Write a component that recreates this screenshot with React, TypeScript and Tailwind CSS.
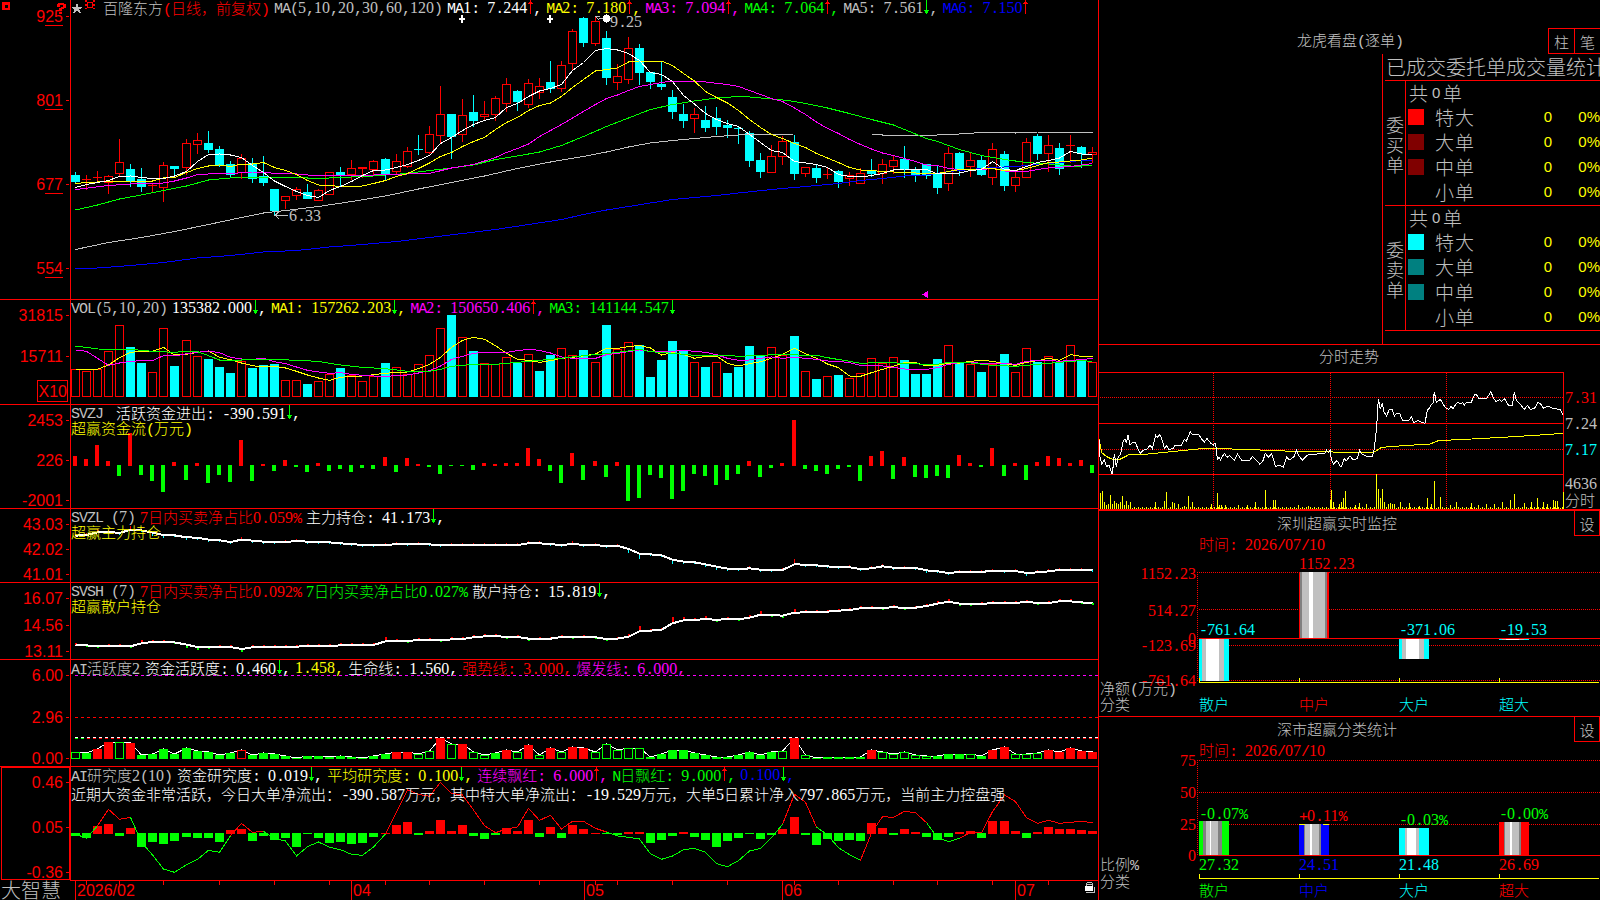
import { Fragment, type ReactNode } from "react";

const RED = "#ff0000";
const CYAN = "#00ffff";
const GREEN = "#00ff00";
const YELLOW = "#ffff00";
const MAGENTA = "#ff00ff";
const BLUE = "#0000ff";
const GRAY = "#c0c0c0";
const DARK = "#808080";
const WHITE = "#ffffff";

// candle: colour, high, body top, body bottom, low
type Candle = [string, number, number, number, number];

const candles: Candle[] = [
  ["c", 172, 175, 182, 183], ["r", 175, 179, 180, 190], ["r", 171, 177, 178, 182], ["r", 175, 176, 183, 194],
  ["r", 139, 162, 174, 176], ["c", 164, 169, 181, 187], ["c", 168, 179, 187, 192], ["r", 183, 185, 186, 193],
  ["r", 162, 165, 188, 202], ["c", 166, 166, 169, 176], ["r", 139, 143, 168, 175], ["r", 133, 140, 145, 154],
  ["c", 131, 143, 150, 153], ["c", 146, 149, 166, 167], ["c", 161, 164, 175, 177], ["r", 154, 158, 173, 179],
  ["c", 158, 163, 179, 183], ["c", 156, 176, 183, 186], ["c", 189, 189, 211, 215], ["r", 196, 196, 201, 209],
  ["r", 187, 189, 196, 200], ["c", 184, 192, 199, 199], ["r", 189, 190, 201, 201], ["r", 172, 172, 195, 195],
  ["c", 167, 172, 175, 187], ["r", 160, 168, 175, 180], ["r", 167, 167, 169, 178], ["r", 160, 161, 170, 176],
  ["c", 158, 159, 174, 180], ["r", 154, 161, 172, 174], ["r", 147, 151, 167, 168], ["c", 135, 149, 150, 155],
  ["r", 126, 134, 153, 154], ["r", 86, 114, 136, 143], ["c", 114, 114, 137, 159], ["r", 99, 115, 135, 142],
  ["c", 95, 112, 121, 127], ["r", 101, 114, 117, 120], ["r", 96, 98, 115, 121], ["r", 78, 84, 104, 112],
  ["c", 90, 91, 102, 111], ["r", 79, 83, 105, 108], ["r", 78, 86, 93, 99], ["c", 61, 82, 89, 93],
  ["r", 61, 65, 89, 92], ["r", 29, 31, 64, 70], ["c", 17, 18, 43, 47], ["r", 16, 21, 44, 46],
  ["c", 31, 38, 78, 85], ["r", 64, 76, 83, 90], ["r", 37, 48, 80, 84], ["c", 44, 48, 73, 85],
  ["c", 72, 72, 82, 89], ["c", 62, 84, 87, 90], ["c", 90, 97, 112, 119], ["c", 104, 114, 121, 128],
  ["r", 108, 114, 119, 133], ["c", 106, 120, 128, 132], ["c", 107, 118, 127, 135], ["c", 120, 125, 128, 138],
  ["c", 127, 128, 129, 144], ["c", 131, 133, 161, 167], ["c", 153, 160, 172, 178], ["r", 145, 156, 173, 173],
  ["r", 136, 141, 157, 165], ["c", 135, 142, 174, 180], ["r", 167, 167, 174, 177], ["c", 165, 168, 178, 183],
  ["r", 168, 174, 175, 179], ["c", 170, 171, 182, 188], ["r", 172, 175, 179, 186], ["r", 168, 173, 184, 184],
  ["c", 159, 171, 174, 177], ["r", 159, 164, 174, 184], ["r", 156, 160, 167, 174], ["c", 146, 159, 170, 178],
  ["c", 167, 169, 175, 182], ["c", 164, 164, 176, 179], ["c", 166, 173, 188, 194], ["r", 147, 153, 184, 191],
  ["c", 152, 153, 170, 176], ["r", 153, 160, 167, 177], ["c", 156, 160, 175, 176], ["r", 143, 149, 178, 185],
  ["c", 151, 154, 186, 191], ["r", 172, 177, 186, 192], ["r", 138, 142, 178, 178], ["c", 134, 136, 154, 160],
  ["r", 135, 145, 154, 172], ["c", 143, 148, 169, 175], ["r", 135, 145, 146, 163], ["c", 146, 147, 154, 168],
  ["r", 147, 152, 155, 163],
];

const ma1 = [
  187, 184, 182, 180, 176, 175.5, 177, 178, 178, 175.5, 171, 161, 154, 153.5, 154.5, 157, 165, 172, 180.5, 186, 191,
  195, 197, 190, 186, 181, 175, 170, 169.5, 167, 164, 160, 155, 143, 137, 130, 124, 120, 117, 107, 103, 96, 90.5, 88,
  84, 70, 62, 50, 48, 49.5, 53, 60, 72, 74, 81, 95, 103.5, 113, 119, 123, 126, 134, 142, 150, 152, 161, 162.5, 164,
  167, 174, 176, 176.5, 175, 173, 169.5, 168.5, 168.5, 169, 173.5, 173, 172.5, 170, 169, 161, 169, 170, 166, 162, 160,
  157.5, 151, 153.5, 154,
];

// sparse lines are flat lists of candle index, y
const ma2 = [
  0, 183, 1, 182, 3, 181, 5, 180.5, 7, 180.5, 8, 177.5, 9, 177, 10, 172, 11, 168, 12, 165.5, 13, 164.5, 14, 166, 15,
  163.5, 16, 163.5, 17, 162, 18, 167, 19, 170, 20, 174, 21, 180, 22, 184.5, 23, 185, 24, 186, 25, 186.5, 26, 185.5, 27,
  183, 28, 180, 29, 176, 30, 173, 31, 168, 32, 162.5, 33, 156, 34, 152, 35, 146, 36, 141, 37, 137, 38, 129, 39, 122, 40,
  117, 41, 110, 42, 105, 43, 102.5, 44, 96, 45, 87, 46, 79, 47, 70.5, 48, 69, 49, 67.5, 50, 61.5, 51, 60.5, 53, 60.5,
  54, 65, 55, 73, 56, 80.5, 57, 91, 58, 97, 59, 102.5, 60, 110, 61, 119, 62, 127, 63, 134, 64, 138, 65, 143, 66, 147,
  67, 153, 68, 157.5, 69, 162, 70, 167, 71, 169.5, 72, 170, 73, 171, 74, 171.5, 75, 172, 76, 172.5, 78, 173, 79, 171,
  80, 169, 82, 168.5, 83, 168, 84, 170, 85, 170, 86, 168, 87, 165, 88, 162, 89, 161.5, 90, 160.5, 91, 159.5, 92, 157.5,
];
const ma3 = [
  0, 189, 3, 185, 5, 183.5, 8, 182.5, 9, 180.5, 10, 177.5, 11, 174, 12, 173.5, 14, 173, 16, 171.5, 17, 171.5, 18, 173,
  20, 173.5, 21, 174.5, 23, 175.5, 26, 175, 28, 174, 30, 173.5, 32, 173, 34, 167.5, 36, 164, 38, 157, 39, 152, 40, 148,
  41, 143.5, 42, 136, 43, 130, 44, 124, 45, 117.5, 46, 111, 47, 104, 48, 98, 49, 94.5, 50, 90, 51, 86, 52, 84, 53, 82,
  54, 80.5, 56, 80.5, 57, 81.5, 59, 84, 60, 86, 61, 90, 62, 94, 63, 98, 64, 101, 65, 107.5, 66, 114, 67, 121.5, 68,
  128, 69, 133, 70, 139, 71, 144, 72, 148.5, 73, 152.5, 74, 155, 75, 158, 76, 161, 77, 164.5, 78, 165, 79, 168, 80,
  169, 82, 169, 83, 168, 84, 170.5, 86, 171, 87, 169, 88, 167.5, 90, 166, 92, 163,
];
const ma4 = [
  0, 209.5, 2, 204.5, 4, 198.5, 6, 194.5, 8, 190, 10, 185.5, 12, 179.5, 14, 177.5, 15, 176.5, 20, 176.5, 21, 177.5, 23,
  177.5, 25, 176.5, 27, 175.5, 28, 174.5, 30, 173, 32, 170, 34, 167.5, 36, 164.5, 38, 159, 40, 155.5, 42, 151.5, 44,
  145, 46, 136, 48, 126, 50, 117.5, 52, 109, 54, 104, 56, 100.5, 58, 97.5, 60, 96, 61, 96.5, 62, 97.5, 63, 98.5, 64,
  99.5, 65, 101, 66, 103, 68, 107.5, 70, 113, 72, 119, 74, 124.5, 75, 129, 77, 138, 78, 141, 80, 149, 82, 155, 84, 159,
  86, 162, 88, 163.5, 90, 165.5, 91, 165.5, 92, 165,
];
const ma5 = [
  0, 249, 3, 242, 6, 237, 9, 231, 12, 224, 15, 217, 17, 212.5, 19, 210, 22, 206, 25, 201, 28, 195.5, 31, 188.5, 34,
  182, 37, 175.5, 40, 168, 43, 161.5, 46, 156, 48, 151.5, 50, 146.5, 52, 142.5, 54, 140, 56, 138, 58, 136, 60, 134.5,
  62, 134, 65, 133.5, 72, 133.5, 73, 134.5, 78, 134.5, 80, 133.5, 82, 132, 85, 132.5, 87, 131.5, 92, 131.5,
];
const ma6 = [
  0, 268.5, 2, 267.5, 5, 265, 8, 262, 11, 257.5, 14, 255, 17, 251.5, 20, 250, 23, 246.5, 26, 244, 29, 241, 32, 237, 35,
  233, 38, 229, 41, 224, 44, 219, 46, 214, 48, 209.5, 50, 206, 52, 202.5, 54, 199, 56, 197, 58, 195, 60, 192.5, 63,
  189, 66, 186, 69, 183, 71, 180, 73, 178, 75, 175.5, 77, 174.5, 79, 171, 81, 169, 83, 167, 85, 166, 87, 164, 89, 162,
  91, 160, 92, 159.5,
];

// bar heights of the volume pane
const volumes = [
  28, 26, 28, 46, 72, 50, 34, 25, 69, 31, 57, 41, 38, 30, 24, 36, 29, 32, 33, 17, 17, 13, 16, 23, 29, 22, 16, 21, 34,
  30, 23, 33, 42, 69, 82, 60, 46, 34, 33, 40, 34, 43, 26, 42, 49, 42, 47, 35, 72, 48, 55, 52, 20, 37, 56, 46, 35, 30,
  35, 24, 30, 51, 41, 50, 42, 61, 26, 18, 21, 22, 19, 24, 39, 34, 40, 37, 23, 23, 38, 52, 34, 33, 25, 33, 43, 25, 49,
  35, 41, 35, 52, 37, 35,
];
const volumeDown = new Set([
  5, 6, 9, 12, 13, 14, 16, 17, 18, 21, 24, 28, 34, 36, 40, 42, 43, 46, 48, 51, 52, 53, 54, 55, 57, 59, 60, 61, 62, 65,
  67, 69, 75, 76, 77, 78, 80, 82, 84, 87, 89, 91,
]);

// the indicator series below are stored in thirds of a pixel from the pane's origin
const vma1 = [
  223, 223, 223, 210, 188, 172, 169, 169, 157, 180, 178, 172, 168, 187, 194, 204, 212, 216, 214, 219, 229, 240, 249,
  256, 247, 244, 243, 239, 235, 232, 231, 221, 208, 187, 157, 136, 127, 133, 152, 175, 193, 196, 202, 197, 190, 187,
  183, 177, 160, 160, 155, 151, 159, 180, 173, 178, 190, 184, 183, 205, 213, 206, 200, 190, 178, 160, 176, 190, 207,
  218, 243, 244, 233, 223, 214, 202, 203, 213, 211, 204, 204, 199, 196, 199, 206, 211, 202, 197, 190, 196, 179, 184,
  184,
];
const vma2 = [
  165, 169, 190, 211, 204, 199, 197, 197, 182, 183, 176, 172, 168, 173, 187, 192, 193, 190, 200, 206, 216, 226, 231,
  235, 233, 238, 241, 243, 244, 242, 240, 234, 227, 213, 193, 184, 175, 172, 172, 172, 167, 163, 166, 174, 186, 190,
  190, 190, 179, 175, 170, 165, 169, 169, 169, 166, 169, 172, 179, 190, 196, 195, 190, 186, 190, 187, 190, 193, 198,
  199, 203, 211, 211, 213, 217, 222, 223, 223, 218, 208, 203, 202, 205, 205, 205, 208, 199, 196, 196, 199, 196, 194,
  190,
];
const vma3 = [
  0, 154, 1, 157, 2, 162, 5, 163, 7, 169, 9, 172, 10, 169, 11, 170, 12, 182, 13, 195, 15, 195, 16, 193, 18, 193, 20,
  196, 22, 199, 23, 205, 24, 210, 26, 217, 28, 221, 30, 229, 32, 229, 33, 223, 34, 214, 36, 208, 38, 208, 40, 202, 42,
  196, 44, 190, 46, 182, 48, 176, 50, 168, 51, 163, 52, 170, 54, 175, 56, 181, 59, 181, 60, 184, 62, 181, 64, 178, 66,
  181, 67, 181, 68, 188, 70, 199, 71, 205, 73, 202, 75, 205, 77, 208, 78, 208, 79, 202, 81, 204, 83, 211, 85, 214, 87,
  208, 90, 199, 91, 197, 92, 199,
];

const moneyFlow = [
  483, 492, 450, 498, 543, 414, 540, 558, 591, 501, 555, 504, 564, 540, 561, 435, 558, 507, 528, 495, 516, 531, 504,
  528, 522, 531, 519, 522, 486, 531, 489, 507, 516, 537, 513, 513, 525, 504, 507, 504, 504, 459, 492, 528, 564, 474,
  555, 498, 546, 501, 618, 609, 540, 549, 612, 588, 537, 543, 570, 555, 537, 498, 546, 519, 504, 375, 522, 528, 537,
  522, 516, 558, 483, 468, 552, 486, 546, 549, 543, 549, 480, 504, 516, 459, 543, 504, 555, 501, 483, 489, 504, 495,
  534,
];

const mainHold = [
  92, 90, 82, 80, 84, 74, 76, 83, 90, 91, 97, 98, 104, 106, 111, 104, 107, 110, 111, 111, 108, 110, 111, 112, 115, 117,
  120, 121, 121, 117, 118, 117, 118, 121, 121, 121, 121, 121, 121, 121, 120, 115, 115, 117, 121, 116, 120, 120, 124,
  122, 132, 146, 148, 151, 164, 170, 172, 178, 185, 191, 193, 190, 194, 195, 195, 178, 179, 181, 184, 187, 187, 192,
  190, 184, 188, 188, 189, 196, 199, 204, 201, 201, 201, 197, 199, 198, 204, 202, 199, 195, 195, 195, 196,
];

const retailHold = [
  420, 421, 424, 423, 423, 424, 415, 411, 411, 412, 419, 426, 427, 427, 426, 432, 427, 426, 426, 426, 425, 423, 423,
  423, 421, 420, 420, 420, 409, 407, 408, 405, 405, 406, 403, 402, 397, 394, 393, 396, 396, 401, 401, 401, 396, 397,
  396, 397, 402, 401, 395, 379, 377, 374, 355, 346, 346, 341, 345, 341, 343, 338, 329, 330, 332, 323, 322, 321, 320,
  317, 315, 310, 309, 310, 306, 310, 308, 303, 296, 290, 296, 298, 296, 295, 294, 294, 290, 294, 294, 289, 289, 292,
  295,
];

// upper case = filled, lower case = hollow
const activity =
  "g741 G744 R732 R711 g711 R714 G750 G747 G732 G747 G729 G738 G741 G750 G744 r735 G750 G744 G747 G753 G759 G753 G753 G756 G753 G756 G759 G753 G747 R741 R741 g747 g738 R699 g717 R717 g741 g750 G744 R735 g741 R720 g750 R729 g741 R726 R729 g741 g717 g735 g729 g729 G756 G747 G735 G735 G744 G750 G756 G756 G750 G741 G750 G741 g738 R700 g750 G759 G756 G756 G756 G756 R735 g741 g747 g741 g750 g753 G753 G747 G747 g747 G753 R735 R726 g747 g747 g744 R735 R741 R729 R738 R741"
    .split(" ")
    .map((s) => ({ kind: s[0], y: Number(s.slice(1)) }));

const research = [
  243, 249, 212, 207, 243, 219, 276, 261, 267, 258, 246, 249, 249, 261, 225, 222, 258, 243, 255, 249, 276, 237, 249,
  264, 261, 267, 264, 246, 234, 210, 201, 240, 228, 195, 228, 210, 243, 252, 240, 219, 228, 195, 246, 216, 249, 210,
  222, 234, 237, 240, 231, 231, 264, 255, 243, 231, 246, 255, 276, 258, 249, 237, 252, 240, 222, 186, 240, 270, 252,
  258, 255, 258, 204, 219, 240, 222, 231, 246, 255, 246, 231, 228, 249, 198, 198, 228, 249, 231, 216, 222, 222, 225,
  228,
];
const researchLine = [
  237, 250, 212, 163, 193, 187, 262, 300, 342, 352, 329, 313, 286, 292, 242, 205, 232, 229, 250, 258, 303, 275, 261,
  277, 284, 298, 301, 276, 237, 170, 104, 118, 124, 82, 115, 120, 165, 212, 233, 222, 216, 160, 196, 181, 222, 199,
  199, 220, 231, 243, 247, 252, 296, 313, 303, 284, 280, 292, 326, 335, 317, 288, 280, 248, 208, 118, 142, 216, 240,
  278, 299, 316, 234, 185, 187, 169, 173, 203, 247, 260, 250, 232, 233, 170, 120, 140, 188, 205, 196, 205, 202, 199,
  203,
];
const researchSpans: [number, number][] = [[0, 2], [5, 14], [17, 28], [48, 64], [67, 71], [77, 80]];

const intraday =
  "12,300 15,350 20,372 28,360 35,380 42,375 52,403 58,342 64,380 70,350 76,345 84,305 90,297 94,310 99,284 105,315 112,308 122,308 128,325 135,340 146,330 158,326 165,315 172,326 182,286 187,292 194,284 200,295 208,325 215,318 222,328 235,326 240,315 260,315 268,298 274,303 286,275 292,284 300,282 312,285 320,297 328,306 336,296 348,310 355,316 360,308 364,325 367,358 372,352 376,360 388,340 396,352 404,346 418,362 427,342 440,360 465,360 472,350 480,357 495,373 504,362 511,340 520,352 530,342 542,380 552,375 565,382 575,352 583,360 597,350 604,330 612,348 622,360 632,350 640,344 665,342 690,340 694,330 700,338 706,330 709,360 716,372 726,362 738,382 748,356 754,362 765,348 775,360 787,355 794,330 800,342 812,348 832,350 838,325 845,262 850,176 856,208 862,188 866,215 875,228 882,210 892,208 898,228 905,220 915,222 922,240 942,240 950,230 956,248 968,242 990,250 997,210 1003,205 1008,195 1014,190 1018,155 1024,188 1036,178 1044,192 1054,206 1062,208 1068,200 1074,206 1086,188 1096,190 1104,188 1108,195 1116,186 1128,188 1140,162 1146,166 1152,175 1175,175 1188,155 1195,175 1204,185 1214,178 1220,185 1228,175 1236,188 1240,195 1252,196 1258,155 1264,182 1275,192 1288,208 1298,196 1306,208 1318,206 1328,188 1336,190 1346,205 1358,198 1374,206 1396,208 1405,226";
const intradayAvg =
  "12,298 20,338 35,350 52,358 75,358 100,345 160,342 260,332 330,325 450,328 540,332 600,334 700,335 740,338 835,338 860,322 940,316 1005,312 1030,302 1130,297 1240,291 1320,286 1405,280";
const intradayVolume: Record<number, number> = {
  16: 460, 22: 453, 28: 485, 34: 494, 40: 493, 46: 466, 52: 492, 58: 484, 64: 488, 70: 492, 76: 486, 82: 468, 88: 495,
  94: 483, 100: 494, 106: 487, 182: 487, 208: 484, 214: 456, 232: 486, 238: 489, 250: 492, 268: 497, 280: 468,
  292: 487, 349: 492, 367: 458, 373: 494, 379: 495, 391: 494, 430: 495, 456: 495, 481: 487, 511: 450, 535: 480,
  541: 480, 610: 496, 640: 497, 706: 480, 709: 450, 715: 487, 733: 492, 739: 487, 745: 473, 751: 453, 781: 494,
  793: 488, 814: 492, 844: 403, 850: 447, 856: 473, 862: 447, 868: 487, 880: 493, 886: 488, 892: 493, 898: 492,
  916: 487, 943: 488, 973: 497, 997: 474, 1009: 492, 1018: 423, 1036: 470, 1066: 495, 1084: 487, 1130: 488,
  1150: 495, 1175: 491, 1198: 491, 1222: 485, 1246: 479, 1258: 462, 1288: 488, 1308: 486, 1327: 474, 1345: 487,
  1357: 493, 1375: 480, 1381: 483, 1387: 483, 1405: 456,
};

const cx = (i: number) => 75 + Math.round(i * 11.054);
const at = (origin: number, v: number) => origin + v / 3;
const ry = (origin: number, v: number) => Math.round(at(origin, v));

const dense = (ys: number[], origin?: number) =>
  ys.map((y, i) => `${cx(i) + 0.5},${origin === undefined ? y + 0.5 : at(origin, y)}`).join(" ");

const sparse = (flat: number[], origin?: number) => {
  const out: string[] = [];
  for (let k = 0; k < flat.length; k += 2) {
    const y = flat[k + 1];
    out.push(`${cx(flat[k]) + 0.5},${origin === undefined ? y + 0.5 : at(origin, y)}`);
  }
  return out.join(" ");
};

function Line({ points, color, width = 1 }: { points: string; color: string; width?: number }) {
  return <polyline points={points} fill="none" stroke={color} strokeWidth={width} />;
}

function Box({ x, y, h, color, hollow }: { x: number; y: number; h: number; color: string; hollow?: boolean }) {
  const height = Math.max(1, h);
  if (hollow && height > 2)
    return <rect x={x - 3.5} y={y + 0.5} width={8} height={height - 1} fill="#000" stroke={color} />;
  return <rect x={x - 4} y={y} width={9} height={height} fill={color} />;
}

const HAN = "font-['Noto_Sans_CJK_SC',sans-serif] text-[15px] font-light tracking-normal";
const DIGIT = "font-['Liberation_Serif',serif] text-[16px] tracking-normal";
const LATIN = "font-['Liberation_Mono',monospace] text-[15px] tracking-[-1px]";

// 8px cells for latin and digits, 15px cells for han
function Runs({ text, svg }: { text: string; svg?: boolean }) {
  const Tag = svg ? "tspan" : "span";
  const parts = text.match(/[\u2e80-\uffff]+|[0-9]+|[^\u2e80-\uffff0-9]+/g) ?? [];
  return (
    <>
      {parts.map((p, i) => (
        <Tag key={i} className={/[\u2e80-\uffff]/.test(p) ? HAN : /[0-9]/.test(p) ? DIGIT : LATIN}>
          {p}
        </Tag>
      ))}
    </>
  );
}

function T({ x, y, color, text, end }: { x: number; y: number; color: string; text: string; end?: boolean }) {
  return (
    <text x={x} y={y + 5} fill={color} textAnchor={end ? "end" : "start"} className="whitespace-pre">
      <Runs text={text} svg />
    </text>
  );
}

function Arrow({ dir }: { dir: "up" | "down" }) {
  return (
    <svg width="6" height="15" className="shrink-0" shapeRendering="crispEdges">
      {dir === "up" ? (
        <path d="M3 0h1v14h-1zM2 2h3v1h-3zM1 3h5v1h-5z" fill={RED} />
      ) : (
        <path d="M3 0h1v14h-1zM1 10h5v1h-5zM2 11h3v2h-3z" fill={GREEN} />
      )}
    </svg>
  );
}

type Item = { text: string; color: string; dir?: "up" | "down"; plain?: boolean };

function Legend({ items, className = "" }: { items: Item[]; className?: string }) {
  return (
    <div className={`relative z-10 flex h-[15px] gap-[5px] whitespace-pre leading-[15px] ${className}`}>
      {items.map((it, i) => (
        <div key={i} className="flex shrink-0 items-center" style={{ color: it.color }}>
          <span className="h-[15px] leading-[15px]">
            <Runs text={it.text} />
          </span>
          {it.dir && <Arrow dir={it.dir} />}
          {!it.plain && (
            <span className="h-[15px] leading-[15px]">
              <Runs text="," />
            </span>
          )}
        </div>
      ))}
    </div>
  );
}

function Pane({
  top,
  height,
  ticks,
  legend,
  caption,
  children,
}: {
  top: number;
  height: number;
  ticks: [number, string][];
  legend: Item[];
  caption?: ReactNode;
  children: ReactNode;
}) {
  return (
    <section className="relative shrink-0" style={{ height }}>
      <svg
        className="absolute inset-0"
        width={1099}
        height={height}
        viewBox={`0 ${top} 1099 ${height}`}
        shapeRendering="crispEdges"
      >
        {top > 0 && <rect x="0" y={top} width="1099" height="1" fill={RED} />}
        <rect x="70" y={top} width="1" height={height} fill={RED} />
        {ticks.map(([y, label]) => (
          <Fragment key={label}>
            <rect x="66" y={y} width="3" height="1" fill={RED} />
            <text x="63" y={y + 6} textAnchor="end" fill={RED} className="font-['Liberation_Sans',sans-serif] text-[16px]">
              {label}
            </text>
          </Fragment>
        ))}
        {children}
      </svg>
      <Legend items={legend} className={top > 0 ? "ml-[71px] mt-px" : "ml-[103px]"} />
      {caption}
    </section>
  );
}

function Caption({ text, color, className }: { text: string; color: string; className: string }) {
  return (
    <div className={`relative z-10 ml-[71px] h-[15px] whitespace-pre leading-[15px] ${className}`} style={{ color }}>
      <Runs text={text} />
    </div>
  );
}

function PricePane() {
  return (
    <Pane
      top={0}
      height={299}
      ticks={[[16, "925"], [100, "801"], [184, "677"], [268, "554"]]}
      legend={[
        { text: "MA(5,10,20,30,60,120)", color: GRAY, plain: true },
        { text: "MA1: 7.244", color: WHITE, dir: "up" },
        { text: "MA2: 7.180", color: YELLOW, dir: "up" },
        { text: "MA3: 7.094", color: MAGENTA, dir: "up" },
        { text: "MA4: 7.064", color: GREEN, dir: "up" },
        { text: "MA5: 7.561", color: GRAY, dir: "down" },
        { text: "MA6: 7.150", color: BLUE, dir: "up", plain: true },
      ]}
    >
      {[25, 109, 193, 277].map((y) => (
        <rect key={y} x="45" y={y} width="18" height="1" fill={RED} />
      ))}
      {candles.map(([kind, high, a, b, low], i) => {
        const color = kind === "c" ? CYAN : RED;
        return (
          <g key={i}>
            <rect x={cx(i)} y={high} width="1" height={low - high} fill={color} />
            <Box x={cx(i)} y={a} h={b - a} color={color} hollow={kind === "r"} />
          </g>
        );
      })}
      <Line points={sparse(ma6)} color={BLUE} />
      <Line points={sparse(ma5)} color={GRAY} />
      <Line points={sparse(ma4)} color={GREEN} />
      <Line points={sparse(ma3)} color={MAGENTA} />
      <Line points={sparse(ma2)} color={YELLOW} />
      <Line points={dense(ma1)} color={WHITE} />
      <path d="M461 15h2v8h-2zM459 18h6v2h-6zM549 15h2v8h-2zM547 18h6v2h-6z" fill={WHITE} />
      <path d="M603 16h7v5h-7zM604 15h5v7h-5zM606 14h1v9h-1zM602 18h9v1h-9z" fill={WHITE} />
      <path d="M595.5 16.5l4 4M595.5 16.5h4M599 18.5h4" stroke={GRAY} fill="none" />
      <path d="M279 211.5l-4 4l4 3M275 215.5h13" stroke={GRAY} fill="none" />
      <T x={610} y={22} color={GRAY} text="9.25" />
      <T x={289} y={216} color={GRAY} text="6.33" />
      <path d="M928 291v7l-6-3.500z" fill={MAGENTA} />
    </Pane>
  );
}

function VolumePane() {
  return (
    <Pane
      top={299}
      height={105}
      ticks={[[315, "31815"], [356, "15711"]]}
      legend={[
        { text: "VOL(5,10,20)", color: GRAY, plain: true },
        { text: "135382.000", color: WHITE, dir: "down" },
        { text: "MA1: 157262.203", color: YELLOW, dir: "down" },
        { text: "MA2: 150650.406", color: MAGENTA, dir: "up" },
        { text: "MA3: 141144.547", color: GREEN, dir: "down", plain: true },
      ]}
    >
      <rect x="37.5" y="380.5" width="30" height="21" fill="none" stroke={RED} />
      <text x="67" y="397" textAnchor="end" fill={RED} className="font-['Liberation_Sans',sans-serif] text-[16px]">
        X10
      </text>
      {volumes.map((h, i) => (
        <Box key={i} x={cx(i)} y={397 - h} h={h} color={volumeDown.has(i) ? CYAN : RED} hollow={!volumeDown.has(i)} />
      ))}
      <Line points={dense(vma1, 295)} color={YELLOW} />
      <Line points={dense(vma2, 295)} color={MAGENTA} />
      <Line points={sparse(vma3, 295)} color={GREEN} />
    </Pane>
  );
}

function FlowPane() {
  return (
    <Pane
      top={404}
      height={104}
      ticks={[[420, "2453"], [460, "226"], [500, "-2001"]]}
      legend={[
        { text: "SVZJ ", color: GRAY, plain: true },
        { text: "活跃资金进出: -390.591", color: WHITE, dir: "down" },
      ]}
      caption={<Caption text="超赢资金流(万元)" color={YELLOW} className="mt-0" />}
    >
      {moneyFlow.map((v, i) => {
        const y = ry(295, v);
        return v < 512 ? (
          <rect key={i} x={cx(i) - 2} y={y} width="4" height={466 - y} fill={RED} />
        ) : (
          <rect key={i} x={cx(i) - 2} y={465} width="4" height={y - 465} fill={GREEN} />
        );
      })}
    </Pane>
  );
}

function HoldLine({ data, down, tick }: { data: number[]; down: string; tick: number }) {
  return (
    <>
      {data.map((v, i) => {
        const d = i ? v - data[i - 1] : -1;
        const y = at(505, v);
        const len = Math.max(1, Math.abs(d) * 0.28) + 1;
        return d > 0 ? (
          <rect key={i} x={cx(i)} y={y} width={tick} height={len} fill={down} />
        ) : (
          <rect key={i} x={cx(i)} y={y - len} width={tick} height={len} fill={RED} />
        );
      })}
      <Line points={dense(data, 505)} color={WHITE} width={2} />
    </>
  );
}

function MainHoldPane() {
  return (
    <Pane
      top={508}
      height={74}
      ticks={[[524, "43.03"], [549, "42.02"], [574, "41.01"]]}
      legend={[
        { text: "SVZL (7)", color: GRAY, plain: true },
        { text: "7日内买卖净占比0.059%", color: RED, plain: true },
        { text: "主力持仓: 41.173", color: WHITE, dir: "down" },
      ]}
      caption={<Caption text="超赢主力持仓" color={YELLOW} className="mt-0" />}
    >
      <HoldLine data={mainHold} down={CYAN} tick={1} />
    </Pane>
  );
}

function RetailHoldPane() {
  return (
    <Pane
      top={582}
      height={77}
      ticks={[[598, "16.07"], [625, "14.56"], [651, "13.11"]]}
      legend={[
        { text: "SVSH (7)", color: GRAY, plain: true },
        { text: "7日内买卖净占比0.092%", color: RED, plain: true },
        { text: "7日内买卖净占比0.027%", color: GREEN, plain: true },
        { text: "散户持仓: 15.819", color: WHITE, dir: "down" },
      ]}
      caption={<Caption text="超赢散户持仓" color={YELLOW} className="mt-0" />}
    >
      <HoldLine data={retailHold} down={GREEN} tick={2} />
    </Pane>
  );
}

function Dashes({ y, color, from = 75, to = 1098 }: { y: number; color: string; from?: number; to?: number }) {
  return <line x1={from} x2={to} y1={y + 0.5} y2={y + 0.5} stroke={color} strokeDasharray="3 3" />;
}

function ActivityPane() {
  return (
    <Pane
      top={659}
      height={107}
      ticks={[[675, "6.00"], [717, "2.96"], [758, "0.00"]]}
      legend={[
        { text: "AI活跃度2", color: GRAY, plain: true },
        { text: "资金活跃度: 0.460", color: WHITE, dir: "down" },
        { text: "1.458", color: YELLOW },
        { text: "生命线: 1.560", color: WHITE },
        { text: "强势线: 3.000", color: RED },
        { text: "爆发线: 6.000", color: MAGENTA },
      ]}
    >
      <Dashes y={675} color={MAGENTA} />
      <Dashes y={717} color={RED} />
      <Dashes y={737} color={WHITE} />
      <Dashes y={738} color={RED} />
      {[[75, 87], [129, 387], [483, 495], [639, 771], [807, 861], [927, 981]].map(([a, b]) => (
        <Dashes key={a} y={738} color={GREEN} from={a} to={b} />
      ))}
      <Line points={dense(activity.map((a) => a.y), 505)} color={WHITE} />
      {activity.map(({ kind, y }, i) => {
        const t = ry(505, y);
        return (
          <Box
            key={i}
            x={cx(i)}
            y={t}
            h={759 - t}
            color={kind.toUpperCase() === "R" ? RED : GREEN}
            hollow={kind === kind.toLowerCase()}
          />
        );
      })}
    </Pane>
  );
}

function ResearchPane() {
  const pts = dense(researchLine, 755).split(" ");
  return (
    <Pane
      top={766}
      height={114}
      ticks={[[782, "0.46"], [827, "0.05"], [872, "-0.36"]]}
      legend={[
        { text: "AI研究度2(10)", color: GRAY, plain: true },
        { text: "资金研究度: 0.019", color: WHITE, dir: "down" },
        { text: "平均研究度: 0.100", color: YELLOW, dir: "down" },
        { text: "连续飘红: 6.000", color: MAGENTA, dir: "up" },
        { text: "N日飘红: 9.000", color: GREEN, dir: "up" },
        { text: "0.100", color: BLUE, dir: "down" },
      ]}
      caption={
        <Caption
          text="近期大资金非常活跃，今日大单净流出：-390.587万元，其中特大单净流出：-19.529万元，大单5日累计净入797.865万元，当前主力控盘强"
          color={WHITE}
          className="mt-[4px]"
        />
      }
    >
      <rect x="1.500" y="767.5" width="68" height="112" fill="none" stroke={RED} />
      {research.map((v, i) => {
        const y = ry(755, v);
        return v < 236 ? (
          <Box key={i} x={cx(i)} y={y} h={834 - y} color={RED} />
        ) : (
          <Box key={i} x={cx(i)} y={833} h={y - 833} color={GREEN} />
        );
      })}
      <Line points={pts.join(" ")} color={RED} />
      {researchSpans.map(([a, b]) => (
        <Line key={a} points={pts.slice(a, b + 1).join(" ")} color={GREEN} />
      ))}
    </Pane>
  );
}

const months: [number, string][] = [[75, "2026/02"], [351, "04"], [584, "05"], [782, "06"], [1015, "07"]];
const weekTicks = [86, 119, 163, 219, 274, 329, 385, 429, 484, 539, 595, 617, 672, 727, 794, 838, 893, 937, 992, 1048];

function TimeAxis() {
  return (
    <footer className="flex h-[20px]">
      <div className="w-[70px] whitespace-nowrap pl-[1px] font-['Noto_Sans_CJK_SC',sans-serif] text-[20px] font-light leading-[20px] text-[#c0c0c0]">
        大智慧
      </div>
      <svg width="1029" height="20" viewBox="70 880 1029 20" shapeRendering="crispEdges">
        <rect x="70" y="880" width="1029" height="1" fill={RED} />
        {weekTicks.map((x) => (
          <rect key={x} x={x} y="881" width="1" height="4" fill={RED} />
        ))}
        {months.map(([x, label]) => (
          <Fragment key={x}>
            <rect x={x} y="881" width="1" height="19" fill={RED} />
            <text x={x + 2} y="896" fill={RED} className="font-['Liberation_Sans',sans-serif] text-[16px]">
              {label}
            </text>
          </Fragment>
        ))}
        <path d="M1087 882h5v1h-5zM1086 883h1v3h-1zM1092 883h1v3h-1zM1087 884h5v1h-5z" fill={GRAY} />
        <rect x="1085" y="886" width="8" height="5" fill={WHITE} />
        <path d="M1086 892h9v1h-9zM1094 887h1v6h-1z" fill={GRAY} />
      </svg>
    </footer>
  );
}

function Button({ children, className = "" }: { children: ReactNode; className?: string }) {
  return (
    <div
      className={`flex h-[26px] w-[26px] items-center justify-center border border-[#ff0000] font-['Noto_Sans_CJK_SC',sans-serif] text-[15px] font-light leading-none text-[#c0c0c0] ${className}`}
    >
      {children}
    </div>
  );
}

function OrderGroup({ side, colors }: { side: string; colors: string[] }) {
  const names = ["特大", "大单", "中单", "小单"];
  return (
    <div className="ml-[2px] flex h-[125px] border-t border-[#ff0000]">
      <div className="flex w-[21px] flex-col items-center justify-center border-r-0 pt-[1px] text-[18px] leading-[20px]">
        {side.split("").map((c) => (
          <span key={c}>{c}</span>
        ))}
      </div>
      <div className="flex-1 border-l border-[#ff0000] text-[19px]">
        <div className="flex h-[23px] items-center whitespace-pre pl-[3px] leading-[23px]">
          共<b className="w-[15px] pl-[4px] font-['Liberation_Sans',sans-serif] text-[15px]">0</b>单
        </div>
        {names.map((name, i) => (
          <div key={name} className="flex h-[25px] items-center pl-[2px] leading-[25px]">
            <i className="h-4 w-4" style={{ background: colors[i] }} />
            <span className="ml-[11px] w-[40px] tracking-[1px]">{name}</span>
            <b className="ml-[55px] w-[22px] text-right font-['Liberation_Sans',sans-serif] text-[15px] text-[#ffff00]">
              0
            </b>
            <b className="w-[48px] text-right font-['Liberation_Sans',sans-serif] text-[15px] text-[#ffff00]">0%</b>
          </div>
        ))}
      </div>
    </div>
  );
}

function OrderPanel() {
  return (
    <section className="h-[344px] overflow-hidden pt-[28px] text-[#c0c0c0]">
      <header className="flex h-[26px] items-center pl-[198px]">
        <span className="whitespace-nowrap leading-[26px]">
          <Runs text="龙虎看盘(逐单)" />
        </span>
        <div className="ml-auto flex">
          <Button className="w-[25px] border-r-0">柱</Button>
          <Button className="border-r-0">笔</Button>
        </div>
      </header>
      <div className="ml-[283px] h-[290px] overflow-hidden border-l border-[#ff0000] font-['Noto_Sans_CJK_SC',sans-serif] font-light">
        <h2 className="h-[26px] whitespace-nowrap pl-[3px] text-[20px] leading-[26px]">已成交委托单成交量统计</h2>
        <OrderGroup side="委买单" colors={["#ff0000", "#800000", "#800000", "transparent"]} />
        <OrderGroup side="委卖单" colors={["#00ffff", "#008080", "#008080", "transparent"]} />
        <div className="ml-[2px] border-t border-[#ff0000]" />
      </div>
    </section>
  );
}

function IntradayPanel() {
  const bars: [number, number][] = [];
  for (let x = 112; x < 1405; x += 6) bars.push([x, 504 - ((x * 7) % 4) * 2]);
  Object.entries(intradayVolume).forEach(([x, y]) => bars.push([Number(x), y]));
  const move = (s: string) =>
    s
      .split(" ")
      .map((p) => {
        const [x, y] = p.split(",").map(Number);
        return `${1095 + x / 3},${340 + y / 3}`;
      })
      .join(" ");
  return (
    <section className="h-[166px]">
      <svg width="501" height="166" viewBox="1099 344 501 166" shapeRendering="crispEdges">
        <rect x="1099" y="344" width="501" height="1" fill={RED} />
        <T x={1319} y={357} color={GRAY} text="分时走势" />
        <path
          d="M1100 397.500H1563M1100 449.500H1563M1213.500 373V508M1330.500 373V508M1446.500 373V508"
          stroke={RED}
          strokeDasharray="1 1"
        />
        <path d="M1099 372.500H1563.500V509M1099 423.500H1563M1099 474.500H1563" stroke={RED} fill="none" />
        {bars.map(([x, y]) => (
          <rect key={x} x={Math.floor(1095 + x / 3)} y={ry(340, y)} width="1" height={509 - ry(340, y)} fill={YELLOW} />
        ))}
        <Line points={move(intradayAvg)} color={YELLOW} />
        <Line points={move(intraday)} color={WHITE} />
        <rect x="1099" y="509" width="501" height="1" fill={RED} />
        <T x={1565} y={398} color={RED} text="7.31" />
        <T x={1565} y={424} color={GRAY} text="7.24" />
        <T x={1565} y={450} color={CYAN} text="7.17" />
        <T x={1565} y={484} color={GRAY} text="4636" />
        <T x={1565} y={501} color={GRAY} text="分时" />
      </svg>
    </section>
  );
}

type Stripe = [string, number];
type BarDef = { name: string; color: string; label: string; labelY: number; y: number; h: number; stripes: Stripe[] };

const negative: Stripe[] = [[CYAN, 3], [GRAY, 4], [WHITE, 13], [GRAY, 5], [CYAN, 5]];

const netBars: BarDef[] = [
  { name: "散户", color: CYAN, label: "-761.64", labelY: 630, y: 639, h: 42, stripes: negative },
  {
    name: "中户", color: RED, label: "1152.23", labelY: 564, y: 572, h: 66,
    stripes: [[RED, 1], [DARK, 2], [GRAY, 7], [WHITE, 4], [GRAY, 12], [DARK, 2], [RED, 2]],
  },
  { name: "大户", color: CYAN, label: "-371.06", labelY: 630, y: 639, h: 20, stripes: negative },
  { name: "超大", color: CYAN, label: "-19.53", labelY: 630, y: 639, h: 1, stripes: negative },
];

const shareBars: (BarDef & { share: string; change: string })[] = [
  {
    name: "散户", color: GREEN, label: "-0.07%", change: GREEN, share: "27.32", labelY: 814, y: 821, h: 34,
    stripes: [[GREEN, 4], [DARK, 3], [GRAY, 4], [WHITE, 1], [GRAY, 7], [DARK, 4], [GREEN, 7]],
  },
  {
    name: "中户", color: BLUE, label: "+0.11%", change: RED, share: "24.51", labelY: 816, y: 824, h: 31,
    stripes: [[BLUE, 5], [DARK, 1], [GRAY, 5], [WHITE, 2], [GRAY, 7], [DARK, 2], [BLUE, 8]],
  },
  {
    name: "大户", color: CYAN, label: "-0.03%", change: GREEN, share: "21.48", labelY: 820, y: 828, h: 27,
    stripes: [[CYAN, 6], [GRAY, 2], [WHITE, 9], [GRAY, 3], [CYAN, 10]],
  },
  {
    name: "超大", color: RED, label: "-0.00%", change: GREEN, share: "26.69", labelY: 814, y: 822, h: 33,
    stripes: [[RED, 5], [DARK, 1], [GRAY, 5], [WHITE, 2], [GRAY, 7], [DARK, 2], [RED, 8]],
  },
];

function Striped({ x, y, h, stripes }: { x: number; y: number; h: number; stripes: Stripe[] }) {
  let left = x;
  return (
    <>
      {stripes.map(([color, w], i) => {
        const r = <rect key={i} x={left} y={y} width={w} height={h} fill={color} />;
        left += w;
        return r;
      })}
    </>
  );
}

function YellowAxis({ y }: { y: number }) {
  return (
    <>
      <rect x="1199" y={y} width="400" height="1" fill={YELLOW} />
      {[1199, 1299, 1399, 1499].map((x) => (
        <rect key={x} x={x} y={y - 4} width="1" height="4" fill={YELLOW} />
      ))}
    </>
  );
}

function StatPanel({ title, top, height, children }: { title: string; top: number; height: number; children: ReactNode }) {
  return (
    <section className="relative" style={{ height }}>
      <svg
        className="absolute inset-0"
        width="501"
        height={height}
        viewBox={`1099 ${top} 501 ${height}`}
        shapeRendering="crispEdges"
      >
        <rect x="1099" y={top} width="501" height="1" fill={RED} />
        {children}
      </svg>
      <header className="relative flex text-[#c0c0c0]">
        <span className="ml-[178px] whitespace-nowrap leading-[26px]">
          <Runs text={title} />
        </span>
        <Button className="ml-auto">设</Button>
      </header>
      <div className="relative ml-[100px] h-[15px] whitespace-pre leading-[15px] text-[#ff0000]">
        <Runs text="时间: 2026/07/10" />
      </div>
    </section>
  );
}

function NetPanel() {
  return (
    <StatPanel title="深圳超赢实时监控" top={510} height={206}>
      <path
        d="M1197.500 572V681M1199 572.500H1600M1199 609.500H1600M1199 645.500H1600M1199 680.500H1600"
        stroke={RED}
        strokeDasharray="1 1"
      />
      <T x={1196} y={574} color={RED} text="1152.23" end />
      <T x={1196} y={611} color={RED} text="514.27" end />
      <T x={1196} y={639} color={RED} text="0" end />
      <T x={1196} y={646} color={RED} text="-123.69" end />
      <T x={1196} y={681} color={RED} text="-761.64" end />
      {netBars.map((b, i) => (
        <Fragment key={b.name}>
          <Striped x={1199 + i * 100} y={b.y} h={b.h} stripes={b.stripes} />
          <T x={1199 + i * 100} y={b.labelY} color={b.color} text={b.label} />
          <T x={1199 + i * 100} y={705} color={b.color} text={b.name} />
        </Fragment>
      ))}
      <rect x="1199" y="638" width="401" height="1" fill={RED} />
      <YellowAxis y={682} />
      <T x={1100} y={689} color={GRAY} text="净额(万元)" />
      <T x={1100} y={705} color={GRAY} text="分类" />
    </StatPanel>
  );
}

function SharePanel() {
  return (
    <StatPanel title="深市超赢分类统计" top={716} height={184}>
      <path
        d="M1197.500 760V856M1199 760.500H1600M1199 792.500H1600M1199 824.500H1600"
        stroke={RED}
        strokeDasharray="1 1"
      />
      <T x={1196} y={761} color={RED} text="75" end />
      <T x={1196} y={793} color={RED} text="50" end />
      <T x={1196} y={825} color={RED} text="25" end />
      <T x={1196} y={856} color={RED} text="0" end />
      {shareBars.map((b, i) => (
        <Fragment key={b.name}>
          <Striped x={1199 + i * 100} y={b.y} h={b.h} stripes={b.stripes} />
          <T x={1199 + i * 100} y={b.labelY} color={b.change} text={b.label} />
          <T x={1199 + i * 100} y={865} color={b.color} text={b.share} />
          <T x={1199 + i * 100} y={891} color={b.color} text={b.name} />
        </Fragment>
      ))}
      <path d="M1299 824h6v1h-6zM1323 824h6v1h-6z" fill={YELLOW} />
      <rect x="1199" y="855" width="401" height="1" fill={RED} />
      <YellowAxis y={878} />
      <T x={1100} y={865} color={GRAY} text="比例%" />
      <T x={1100} y={882} color={GRAY} text="分类" />
    </StatPanel>
  );
}

// badges and stock name sitting on the first legend row
function TitleBadges() {
  return (
    <div className="absolute left-0 top-0 z-20 flex h-[15px] w-[270px] items-start whitespace-nowrap">
      <svg width="103" height="15" shapeRendering="crispEdges" className="shrink-0">
        <path d="M2 2h8v8h-8zM5 5v3h3v-3z" fill={RED} fillRule="evenodd" />
        <path d="M58 3h6v1h2v4h-2v1h-2v2h-3v-3h2v-1h2v-2h-3v2h-3v-3h1zM59 12h3v2h-3z" fill={RED} />
        <path d="M77 3l1.500 4h4l-3 2.500l1.500 4l-4-2.500l-4 2.500l1.500-4l-3-2.500h4z" fill={GRAY} />
        <path
          d="M87 2h6v6h-6zM88 3v4h4v-4zM85 0h2v2h-2zM93 0h2v2h-2zM85 8h2v1h-2zM93 8h2v1h-2zM85 4h2v2h-2zM93 4h2v2h-2z"
          fill={RED}
          fillRule="evenodd"
        />
      </svg>
      <span className="leading-[15px] text-[#c0c0c0]">
        <Runs text="百隆东方" />
      </span>
      <span className="leading-[15px] text-[#ff0000]">
        <Runs text="(日线，前复权)" />
      </span>
    </div>
  );
}

export default function App() {
  return (
    <div className="grid h-[900px] w-[1600px] grid-cols-[1099px_501px] overflow-hidden bg-black">
      <main className="relative flex flex-col [&>section:first-of-type>div]:pl-[171px]">
        <TitleBadges />
        <PricePane />
        <VolumePane />
        <FlowPane />
        <MainHoldPane />
        <RetailHoldPane />
        <ActivityPane />
        <ResearchPane />
        <TimeAxis />
      </main>
      <aside className="-ml-px flex flex-col border-l border-[#ff0000]">
        <OrderPanel />
        <IntradayPanel />
        <NetPanel />
        <SharePanel />
      </aside>
    </div>
  );
}
